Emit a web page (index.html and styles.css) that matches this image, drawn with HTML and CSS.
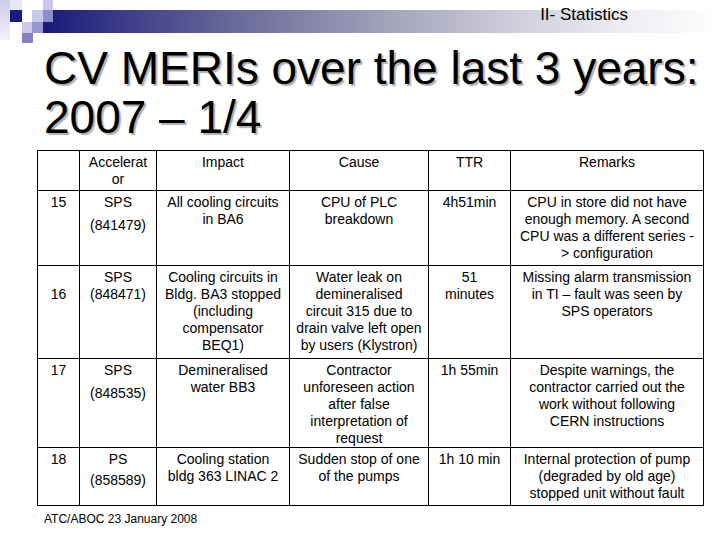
FILE: index.html
```html
<!DOCTYPE html>
<html>
<head>
<meta charset="utf-8">
<link rel="stylesheet" href="styles.css">
</head>
<body>
<div class="slide">
  <header class="top">
    <svg class="logo" width="65" height="43" viewBox="0 0 65 43">
      <defs>
        <linearGradient id="lg" x1="0" y1="0" x2="0" y2="1">
          <stop offset="0" stop-color="#cdcdeb"/>
          <stop offset="1" stop-color="#f2f2fa"/>
        </linearGradient>
      </defs>
      <rect x="0" y="0" width="10" height="40" fill="url(#lg)"/>
      <rect x="10" y="0" width="12" height="10" fill="#e6e6f4"/>
      <rect x="10" y="10" width="12" height="12" fill="#1a1a80"/>
      <rect x="22" y="10" width="10" height="12" fill="#ffffff"/>
      <rect x="32" y="10" width="11" height="12" fill="#c8c8e8"/>
      <rect x="43" y="0" width="10" height="10" fill="#c8c8e8"/>
      <rect x="43" y="10" width="10" height="12" fill="#8c8cc8"/>
      <rect x="22" y="22" width="10" height="11" fill="#cacae8"/>
      <rect x="32" y="22" width="11" height="11" fill="#9898d0"/>
      <rect x="22" y="33" width="11" height="10" fill="#8282c2"/>
    </svg>
    <div class="bar"><span class="section">II- Statistics</span></div>
  </header>

  <h1 class="title">CV MERIs over the last 3 years:<br>2007 – 1/4</h1>

  <table class="meri">
    <colgroup>
      <col class="c-num"><col class="c-acc"><col class="c-imp"><col class="c-cause"><col class="c-ttr"><col class="c-rem">
    </colgroup>
    <tr class="r-head">
      <td></td>
      <td>Accelerat<br>or</td>
      <td>Impact</td>
      <td>Cause</td>
      <td>TTR</td>
      <td>Remarks</td>
    </tr>
    <tr class="r-15">
      <td>15</td>
      <td><div>SPS</div><div class="id">(841479)</div></td>
      <td>All cooling circuits<br>in BA6</td>
      <td>CPU of PLC<br>breakdown</td>
      <td>4h51min</td>
      <td>CPU in store did not have<br>enough memory. A second<br>CPU was a different series -<br>&gt; configuration</td>
    </tr>
    <tr class="r-16">
      <td><div class="num-low">16</div></td>
      <td>SPS<br>(848471)</td>
      <td>Cooling circuits in<br>Bldg. BA3 stopped<br>(including<br>compensator<br>BEQ1)</td>
      <td>Water leak on<br>demineralised<br>circuit 315 due to<br>drain valve left open<br>by users (Klystron)</td>
      <td>51<br>minutes</td>
      <td>Missing alarm transmission<br>in TI – fault was seen by<br>SPS operators</td>
    </tr>
    <tr class="r-17">
      <td>17</td>
      <td><div>SPS</div><div class="id">(848535)</div></td>
      <td>Demineralised<br>water BB3</td>
      <td>Contractor<br>unforeseen action<br>after false<br>interpretation of<br>request</td>
      <td>1h 55min</td>
      <td>Despite warnings, the<br>contractor carried out the<br>work without following<br>CERN instructions</td>
    </tr>
    <tr class="r-18">
      <td>18</td>
      <td><div>PS</div><div class="id id-s">(858589)</div></td>
      <td>Cooling station<br>bldg 363 LINAC 2</td>
      <td>Sudden stop of one<br>of the pumps</td>
      <td>1h 10 min</td>
      <td>Internal protection of pump<br>(degraded by old age)<br>stopped unit without fault</td>
    </tr>
  </table>

  <footer class="foot">ATC/ABOC 23 January 2008</footer>
</div>
</body>
</html>
```

FILE: styles.css
```css
html, body {
  margin: 0;
  padding: 0;
  background: #ffffff;
}
body {
  font-family: "Liberation Sans", Arial, sans-serif;
  color: #000000;
}
.slide {
  position: relative;
  width: 720px;
  height: 540px;
  overflow: hidden;
}
.top {
  height: 43px;
  display: flex;
  flex-direction: column;
}
.logo {
  position: absolute;
  left: 0;
  top: 0;
  z-index: 1;
}
.bar {
  margin-top: 10px;
  margin-left: 43px;
  height: 23px;
  background: linear-gradient(to right, #1a1a7c 0%, #3c3c88 12%, #6e6e9c 30%, #a0a0b8 50%, #cfcfdc 70%, #ececf2 85%, #ffffff 100%);
  display: flex;
  justify-content: flex-end;
  align-items: flex-start;
  padding-right: 92px;
}
.section {
  font-size: 17px;
  line-height: 18px;
  margin-top: -4px;
  color: #000;
}
.title {
  margin: 0 0 0 44px;
  font-weight: normal;
  font-size: 46px;
  line-height: 49px;
  padding-top: 1px;
  color: #000;
  text-shadow: 2px 2px 1px #b0b0b0;
  white-space: nowrap;
}
.meri {
  margin: 8px 0 0 37px;
  border-collapse: collapse;
  table-layout: fixed;
  width: 667px;
  font-size: 14px;
  line-height: 17px;
}
.c-num { width: 42px; }
.c-acc { width: 77px; }
.c-imp { width: 133px; }
.c-cause { width: 139px; }
.c-ttr { width: 82px; }
.c-rem { width: 193px; }
.meri td {
  border: 1px solid #000;
  text-align: center;
  vertical-align: top;
  padding: 3px 2px 0 2px;
  white-space: nowrap;
}
.r-head td { height: 36px; }
.r-15 td { height: 71px; }
.r-16 td { height: 89px; }
.r-17 td { height: 85px; }
.r-18 td { height: 54px; }
.id { margin-top: 6px; }
.id-s { margin-top: 4px; }
.num-low { padding-top: 17px; }
.foot {
  margin: 6px 0 0 44px;
  font-size: 12px;
  line-height: 14px;
}
```
